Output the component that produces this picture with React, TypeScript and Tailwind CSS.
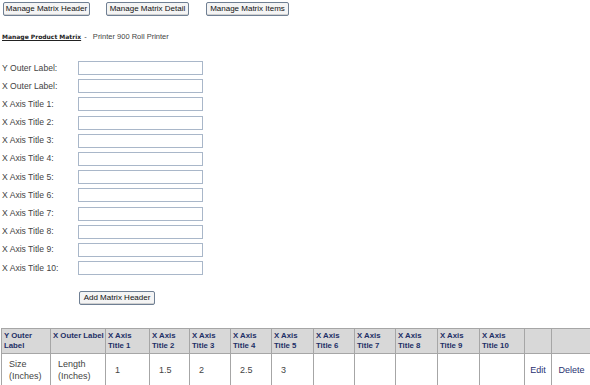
import React from "react";

const labels = [
  "Y Outer Label:",
  "X Outer Label:",
  "X Axis Title 1:",
  "X Axis Title 2:",
  "X Axis Title 3:",
  "X Axis Title 4:",
  "X Axis Title 5:",
  "X Axis Title 6:",
  "X Axis Title 7:",
  "X Axis Title 8:",
  "X Axis Title 9:",
  "X Axis Title 10:",
];

const heads: string[][] = [
  ["Y Outer", "Label"],
  ["X Outer Label"],
  ["X Axis", "Title 1"],
  ["X Axis", "Title 2"],
  ["X Axis", "Title 3"],
  ["X Axis", "Title 4"],
  ["X Axis", "Title 5"],
  ["X Axis", "Title 6"],
  ["X Axis", "Title 7"],
  ["X Axis", "Title 8"],
  ["X Axis", "Title 9"],
  ["X Axis", "Title 10"],
  [],
  [],
];
const widths = [49, 55, 44, 40, 41, 41, 42, 41, 41, 42, 42, 45, 27, 40];
const data = ["Size (Inches)", "Length (Inches)", "1", "1.5", "2", "2.5", "3", "", "", "", "", "", "Edit", "Delete"];

function Btn({ children, className = "" }: { children: React.ReactNode; className?: string }) {
  return (
    <button
      className={
        "h-[14px] px-0 whitespace-nowrap border border-[#6f7f93] rounded-[2px] bg-[#f4f4f4] text-[8px] leading-[12px] text-[#111] font-['Liberation_Sans',Arial,sans-serif] shadow-[inset_0_-1px_0_#cfcfcf] " +
        className
      }
    >
      {children}
    </button>
  );
}

export default function App() {
  return (
    <div className="w-[590px] h-[385px] bg-white font-['Liberation_Sans',Arial,sans-serif] text-[#333] overflow-hidden relative">
      <div className="flex pt-[2px] pl-[3px]">
        <Btn className="w-[87px]">Manage Matrix Header</Btn>
        <Btn className="w-[83px] ml-[16px]">Manage Matrix Detail</Btn>
        <Btn className="w-[83px] ml-[17px]">Manage Matrix Items</Btn>
      </div>
      <div className="mt-[16px] pl-[2px] text-[7.5px] leading-[10px] flex">
        <span className="font-bold underline text-[#222] font-['DejaVu_Sans',Verdana,sans-serif] text-[6px]">Manage Product Matrix</span>
        <span className="ml-[3px] text-[#444]">-&nbsp;&nbsp;&nbsp;Printer 900 Roll Printer</span>
      </div>
      <div className="mt-[19px] flex flex-col gap-[4.2px]">
        {labels.map((l) => (
          <div key={l} className="flex items-center h-[14px]">
            <div className="w-[78px] pl-[2px] text-[8.6px] text-[#444]">{l}</div>
            <div className="w-[125px] h-[14px] border border-[#a9b7c9] bg-white" />
          </div>
        ))}
      </div>
      <div className="mt-[8px] pl-[79px]">
        <Btn className="w-[76px]">Add Matrix Header</Btn>
      </div>
      <table className="mt-[21px] ml-[1px] table-fixed border-collapse w-[589px]">
        <colgroup>
          {widths.map((w, i) => (
            <col key={i} style={{ width: w }} />
          ))}
        </colgroup>
        <thead>
          <tr className="h-[25px]">
            {heads.map((h, i) => (
              <th
                key={i}
                className="border border-[#a6a6a6] bg-[#d8d8d8] text-left align-top pl-[2px] pr-0 pt-[2px] text-[7.8px] leading-[10px] font-bold text-[#1d2f66] whitespace-nowrap font-['Liberation_Sans',Arial,sans-serif]"
              >
                {h.map((line, j) => (
                  <div key={j}>{line}</div>
                ))}
              </th>
            ))}
          </tr>
        </thead>
        <tbody>
          <tr className="h-[32px]">
            {data.map((d, i) => (
              <td
                key={i}
                className={
                  "border border-[#a6a6a6] align-middle text-[9px] leading-[12px] " +
                  (i >= 12 ? "text-center text-[#2a3372]" : i >= 2 ? "pl-[9px] text-[#444]" : "pl-[7px] text-[#444]")
                }
              >
                {d}
              </td>
            ))}
          </tr>
        </tbody>
      </table>
    </div>
  );
}
